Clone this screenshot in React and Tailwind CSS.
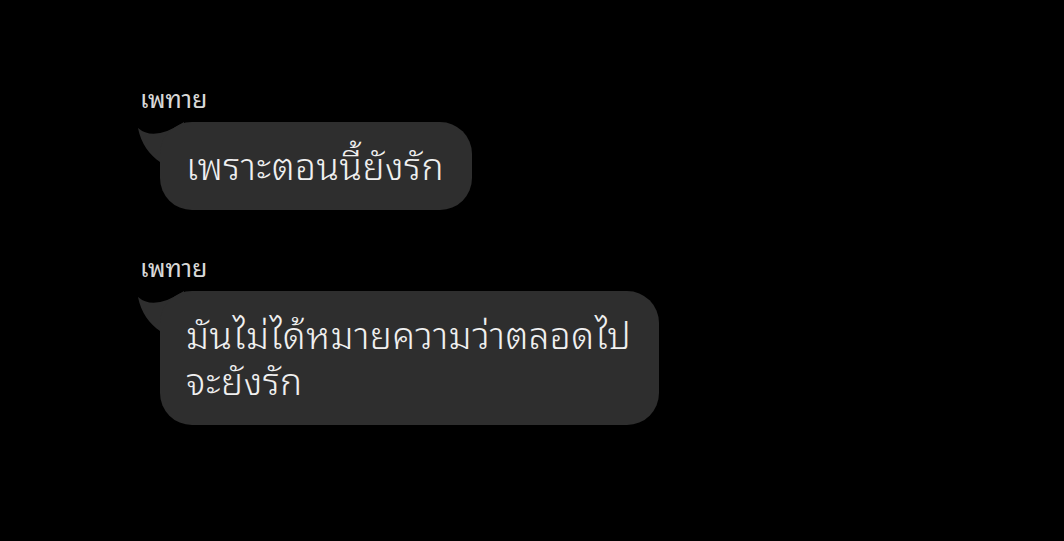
import React from 'react';

const MESSAGES = [
  { name: 'เพทาย', lines: ['เพราะตอนนี้ยังรัก'] },
  { name: 'เพทาย', lines: ['มันไม่ได้หมายความว่าตลอดไป', 'จะยังรัก'] },
];

function Tail() {
  return (
    <svg width="46" height="50" viewBox="0 0 46 50" className="absolute -left-[22px] top-0">
      <path d="M0 6 Q 16 20 46 0 L 46 50 L 22 50 L 22 40 C 12 33 3 22 0 6 Z" fill="#2e2e2e" />
    </svg>
  );
}

function Bubble({ name, lines }) {
  return (
    <div className="flex flex-col items-start">
      <div className="text-[25px] leading-[28px] text-[#d8d8d8]">{name}</div>
      <div className="relative ml-[20px] mt-[11px]">
        <Tail />
        <div className="relative rounded-[32px] bg-[#2e2e2e] pl-[26px] pr-[28px] pt-[19px] pb-[23px] text-[37px] leading-[46px] tracking-[0.5px] font-light text-[#f0f0f0]">
          {lines.map((l, i) => (
            <div key={i}>{l}</div>
          ))}
        </div>
      </div>
    </div>
  );
}

export default function App() {
  return (
    <div
      className="w-[1064px] h-[541px] bg-black pl-[140px] pt-[83px] flex flex-col gap-[42px] overflow-hidden"
      style={{ fontFamily: '"Noto Sans Thai Looped", "Noto Serif Thai", Loma, Garuda, "Tlwg Typo", "Noto Sans", sans-serif' }}
    >
      {MESSAGES.map((m, i) => (
        <Bubble key={i} {...m} />
      ))}
    </div>
  );
}
